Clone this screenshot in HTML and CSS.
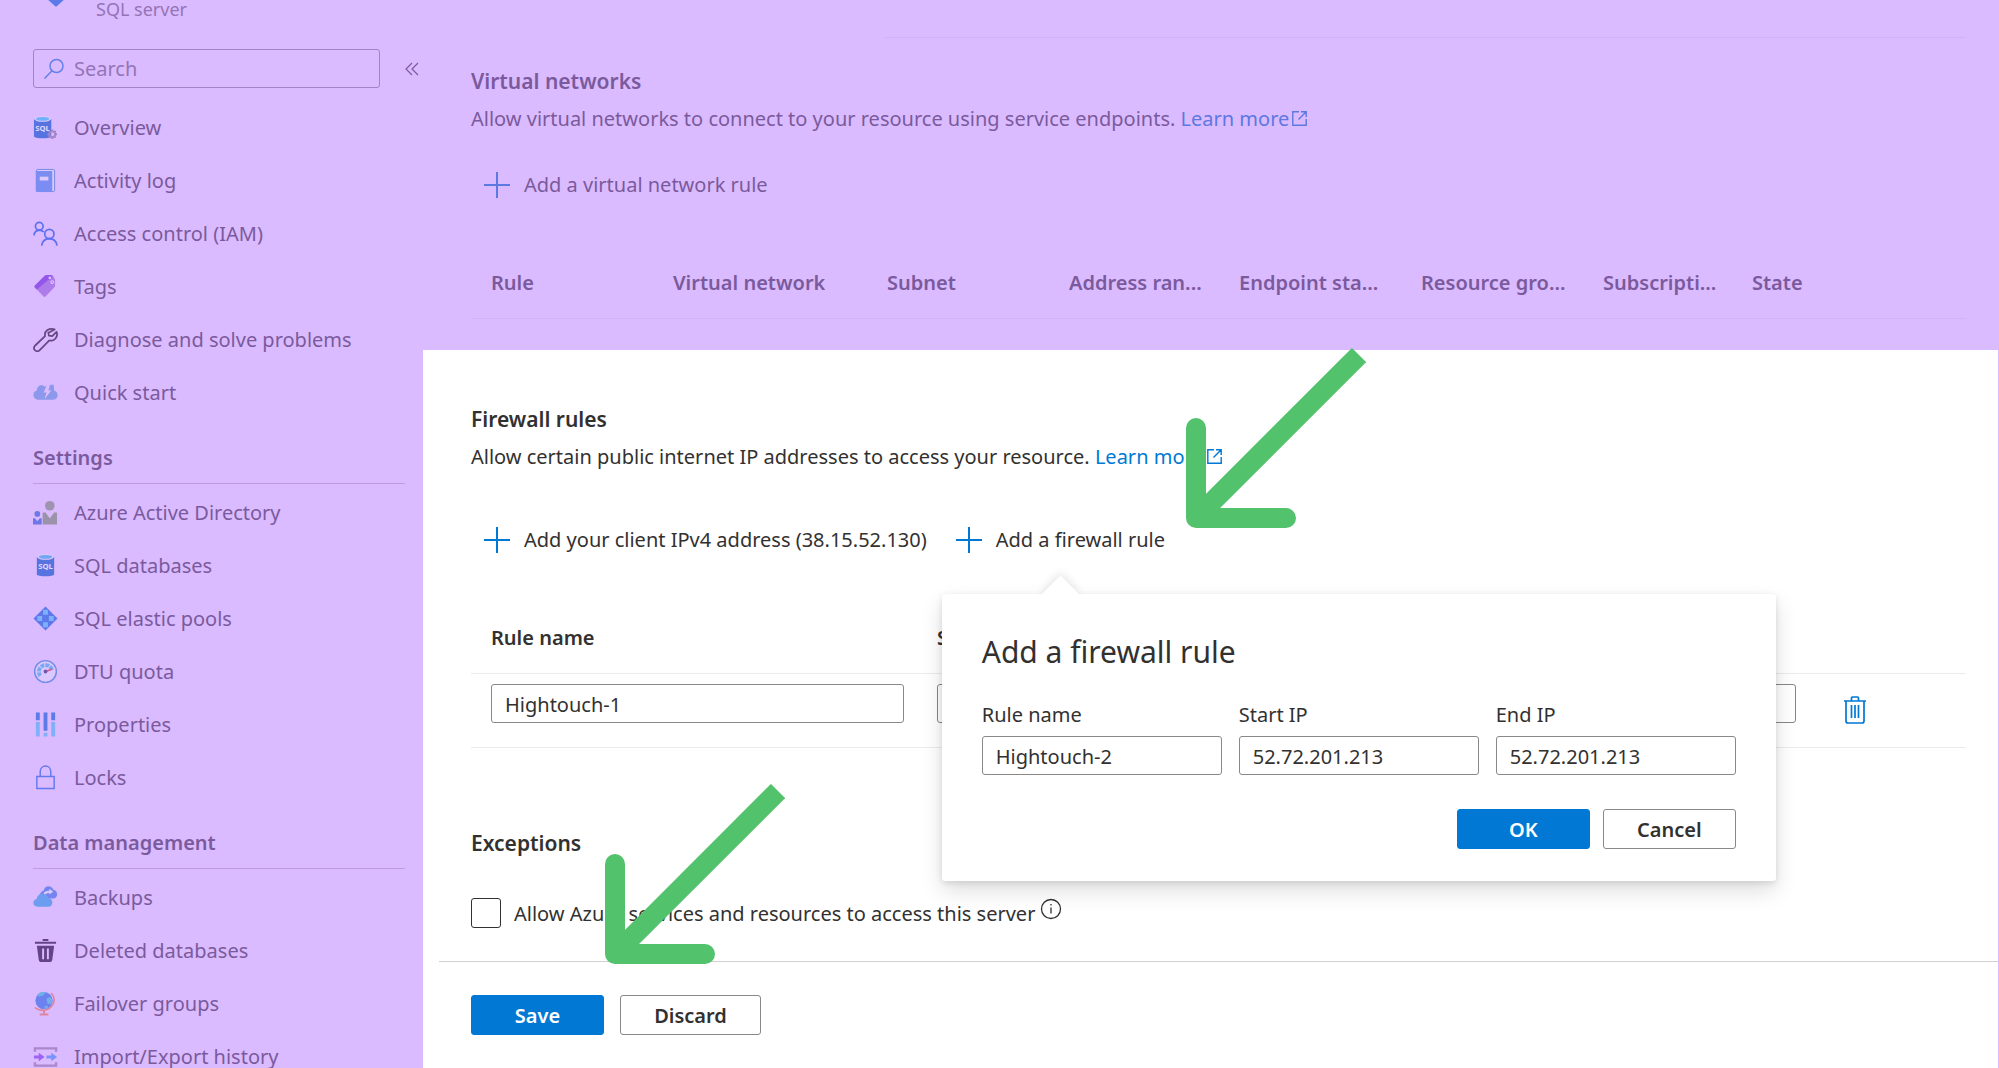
FILE: index.html
```html
<!DOCTYPE html>
<html lang="en">
<head>
<meta charset="utf-8">
<meta name="viewport" content="width=device-width, initial-scale=1">
<title>SQL server - Networking</title>
<link rel="stylesheet" href="styles.css">
</head>
<body>
<svg class="defs" aria-hidden="true">
  <symbol id="plus" viewBox="0 0 28 28"><path d="M14 1v26M1 14h26" fill="none" stroke="currentColor" stroke-width="2"/></symbol>
  <symbol id="external" viewBox="0 0 17 17"><path d="M8 1.800H1.800v13.400h13.400V9M10 1.800h5.200V7M15.200 1.800L7.500 9.500" fill="none" stroke="currentColor" stroke-width="1.400"/></symbol>
  <symbol id="arrow" viewBox="0 0 180 180"><path d="M10 80V170H100" fill="none" stroke="#53c26c" stroke-width="20" stroke-linecap="round" stroke-linejoin="round"/><path d="M10 170L173 7" stroke="#53c26c" stroke-width="20"/></symbol>
</svg>
<div class="app">
  <aside class="sidebar">
    <header class="resource">
      <svg class="resource-icon" viewBox="0 0 46 32"><path d="M13 0h20v16l-9 8q-1 1-2 0l-9-8z" fill="#5c7ae8"/></svg>
      <span>SQL server</span>
    </header>
    <div class="search-row">
      <label class="search">
        <svg class="search-icon" viewBox="0 0 22 22" aria-hidden="true"><circle cx="13.500" cy="8" r="6.500" fill="none" stroke="#6480ea" stroke-width="1.500"/><path d="M9 12.800L1.500 20.500" stroke="#6480ea" stroke-width="1.500"/></svg>
        <input type="search" placeholder="Search" aria-label="Search">
      </label>
      <button class="collapse" aria-label="Collapse menu"><svg viewBox="0 0 14 14"><path d="M7 1L1 7l6 6M13 1L7 7l6 6" fill="none" stroke="currentColor" stroke-width="1.200"/></svg></button>
    </div>
    <nav>
      <a class="item" href="#"><svg viewBox="0 0 26 26"><path d="M1 4v18c0 3 18 3 18 0V4z" fill="#5673e0"/><ellipse cx="10" cy="4" rx="9" ry="3" fill="#dcc8fc"/><ellipse cx="10" cy="4" rx="7" ry="2" fill="#6fb0fa"/><text x="10" y="17" class="sql">SQL</text><circle cx="20" cy="20" r="3" fill="none" stroke="#a385c6" stroke-width="2"/><path d="M20 15v2M20 23v2M15 20h2M23 20h2M16.500 16.500l1 1M22.500 22.500l1 1M23.500 16.500l-1 1M17.500 22.500l-1 1" stroke="#a385c6" stroke-width="2"/></svg>Overview</a>
      <a class="item" href="#"><svg viewBox="0 0 26 26"><rect x="3.500" y="1.500" width="19" height="23" rx="1.500" fill="#dcc8fc" stroke="#7187e5"/><path d="M3 3h17v22H4q-1 0-1-1z" fill="#7b8df3"/><rect x="7" y="9" width="9" height="4" fill="#dcc8fc"/></svg>Activity log</a>
      <a class="item" href="#"><svg viewBox="0 0 26 26" fill="none" stroke="#5d70f0" stroke-width="1.800"><circle cx="6.500" cy="5.500" r="4"/><path d="M1 15q.500-5 5.500-5.500 3 0 4.500 2"/><circle cx="17" cy="13.500" r="4.800"/><path d="M9 25.500q1-7 8-7.200 7 .200 8 7.200"/></svg>Access control (IAM)</a>
      <a class="item" href="#"><svg viewBox="0 0 26 26"><path d="M2 12L12 2q1-1 3-1h5l1 1 2 4v6q0 1-1 2L13 23.500q-1 1-2 0L2 14q-1-1 0-2z" fill="#ad7bea"/><path d="M2 12L12 2q1-1 3-1h4l1 3-4 2L4 16l-2-2q-1-1 0-2z" fill="#9355ea"/><circle cx="17.500" cy="4" r="1.300" fill="#e2ccff"/><circle cx="20" cy="8.500" r="1.500" fill="#b88af0" stroke="#e2ccff"/></svg>Tags</a>
      <a class="item" href="#"><svg viewBox="0 0 26 26"><path d="M22.500 2.500C17 .5 11.500 4 12.500 9.500L2 19.500c-3 4 2 7.500 5 4.500L17 14c5 1.500 9.500-4 7.500-9L20 9.500l-3.500-.5-.500-3z" fill="none" stroke="#674683" stroke-width="1.800" stroke-linejoin="round"/></svg>Diagnose and solve problems</a>
      <a class="item" href="#"><svg viewBox="0 0 26 26"><path d="M6 20.500c-7 0-7-8.500-2-9.500 0-6 6-7 8.500-4l3-2h6l.500 6c5 1 5 9.500-1 9.500z" fill="#8c98ec"/><path d="M15 4l-4 9h3l-2 7 7-9h-3l2-7z" fill="#dbbbff"/></svg>Quick start</a>
      <h2 class="group">Settings</h2>
      <a class="item" href="#"><svg viewBox="0 0 26 26"><circle cx="17.500" cy="6" r="5" fill="#9f94b0"/><path d="M10 13h3l4.500 6 4.500-6h3v12.500H10z" fill="#9c93aa"/><circle cx="4.500" cy="14.500" r="3" fill="#6d78e6"/><path d="M0 19h2l2.500 3L7 19h2v6.500H0z" fill="#6d78e6"/></svg>Azure Active Directory</a>
      <a class="item" href="#"><svg viewBox="0 0 26 26"><path d="M4 4v18c0 3 18 3 18 0V4z" fill="#5673e0"/><ellipse cx="13" cy="4" rx="9" ry="3" fill="#dcc8fc"/><ellipse cx="13" cy="4" rx="7" ry="2" fill="#6fa6f0"/><text x="13" y="17" class="sql">SQL</text></svg>SQL databases</a>
      <a class="item" href="#"><svg viewBox="0 0 26 26"><path d="M13 .5L25.500 13 13 25.500.5 13z" fill="#5c78ea"/><path d="M10.500 4h5v5h-5zM4.500 10.500h5v5h-5zM16.500 10.500h5v5h-5zM10.500 17h5v5h-5z" fill="#80b0fb"/></svg>SQL elastic pools</a>
      <a class="item" href="#"><svg viewBox="0 0 26 26"><circle cx="13" cy="13" r="11.300" fill="#dcc8fc" stroke="#718bea" stroke-width="1.500"/><path d="M7.500 17.500A7 7 0 1 1 20 12" fill="none" stroke="#79a8f5" stroke-width="4" stroke-dasharray="4 1"/><path d="M13 13l7-2.500" stroke="#d0609c" stroke-width="1.800"/><circle cx="13" cy="13" r="2" fill="#7556ac"/></svg>DTU quota</a>
      <a class="item" href="#"><svg viewBox="0 0 26 26"><path d="M3 .5h4v8H3zM11 .5h4v19h-4zM19 .5h4v8h-4z" fill="#5c7ae8"/><path d="M3 10.500h4v15H3zM11 21.500h4v4h-4zM19 10.500h4v15h-4z" fill="#80b0f7"/></svg>Properties</a>
      <a class="item" href="#"><svg viewBox="0 0 26 26" fill="none" stroke="#6478ef" stroke-width="1.500"><path d="M4 12h18v12.500H4zM7.500 12V7c0-8 11-8 11 0v5"/></svg>Locks</a>
      <h2 class="group">Data management</h2>
      <a class="item" href="#"><svg viewBox="0 0 26 26"><path d="M9 14c-4-4 0-8 2-8 1-6 9-6 10-1 6 1 5 9 0 9z" fill="#7485ef"/><path d="M11 9q1-3 6-3V4l4 3-4 3V8q-3 0-4 2z" fill="#dcc8fc"/><path d="M5 22.500c-6 0-6-7.500-1-8 0-6 9-8 12-1 6 1 5 9 0 9z" fill="#6d9df0"/></svg>Backups</a>
      <a class="item" href="#"><svg viewBox="0 0 26 26"><path d="M10 1h6v2h-6zM2 4h22v2H2zM4 8h18l-2 15q-.3 2-2 2H8q-1.700 0-2-2z" fill="#65438a"/><path d="M9.500 11h2v11h-2zM14.500 11h2v11h-2z" fill="#dbbbff"/></svg>Deleted databases</a>
      <a class="item" href="#"><svg viewBox="0 0 26 26"><circle cx="11.500" cy="10" r="9" fill="#6c82ee"/><path d="M5 3q5-4 8-1l-3 3-4 1zM14 8l4-2 2 3-1 5-4-1zM12 16l3-1 1 2-4 2z" fill="#75aeea"/><path d="M19 2c7 8 0 18-8 18-4 0-7-1-9-3" fill="none" stroke="#df849e" stroke-width="1.700"/><path d="M11.500 20v4M7 24.500h9" stroke="#df849e" stroke-width="2"/></svg>Failover groups</a>
      <a class="item" href="#"><svg viewBox="0 0 26 26"><path d="M2 8V4.500h22V8M2 19v3.500h22V19" fill="none" stroke="#ab87cc" stroke-width="2.500"/><path d="M1 12h5V9l6 4.500L6 18v-3H1z" fill="#9e62f5"/><path d="M14 12h5V9l6 4.500-6 4.500v-3h-5z" fill="#7893fb"/></svg>Import/Export history</a>
    </nav>
  </aside>

  <main class="content">
    <section class="virtual">
      <hr class="section-line">
      <h2>Virtual networks</h2>
      <p>Allow virtual networks to connect to your resource using service endpoints. <a href="#">Learn more<svg><use href="#external"/></svg></a></p>
      <div class="commands"><button class="command"><svg><use href="#plus"/></svg>Add a virtual network rule</button></div>
      <table class="networks">
        <colgroup><col class="w-m"><col class="w-l"><col class="w-m"><col class="w-s"><col class="w-m"><col class="w-m"><col class="w-xs"><col></colgroup>
        <thead><tr><th>Rule</th><th>Virtual network</th><th>Subnet</th><th>Address ran...</th><th>Endpoint sta...</th><th>Resource gro...</th><th>Subscripti...</th><th>State</th></tr></thead>
      </table>
    </section>

    <section class="firewall">
      <h2>Firewall rules</h2>
      <p>Allow certain public internet IP addresses to access your resource. <a href="#">Learn more<svg><use href="#external"/></svg></a></p>
      <div class="commands">
        <button class="command"><svg><use href="#plus"/></svg>Add your client IPv4 address (38.15.52.130)</button>
        <div class="anchor">
          <button class="command"><svg><use href="#plus"/></svg>Add a firewall rule</button>
          <form class="popover">
            <h3>Add a firewall rule</h3>
            <div class="fields">
              <label>Rule name<input type="text" value="Hightouch-2"></label>
              <label>Start IP<input type="text" value="52.72.201.213"></label>
              <label>End IP<input type="text" value="52.72.201.213"></label>
            </div>
            <div class="buttons end">
              <button type="button" class="button primary">OK</button>
              <button type="button" class="button">Cancel</button>
            </div>
          </form>
          <svg class="arrow to-rule" aria-hidden="true"><use href="#arrow"/></svg>
        </div>
      </div>
      <table class="rules">
        <colgroup><col><col><col><col class="w-action"></colgroup>
        <thead><tr><th>Rule name</th><th>Start IP</th><th>End IP</th><th></th></tr></thead>
        <tbody><tr>
          <td><input type="text" value="Hightouch-1" aria-label="Rule name"></td>
          <td><input type="text" aria-label="Start IP"></td>
          <td><input type="text" aria-label="End IP"></td>
          <td class="action"><button class="delete" aria-label="Delete rule"><svg viewBox="0 0 22 28" fill="none" stroke="#0078d4" stroke-width="1.700"><path d="M0 5h22M7.500 5V2q0-1 1-1h5q1 0 1 1v3M2 5v20q0 2 2 2h14q2 0 2-2V5M7.500 9v13M11 9v13M14.500 9v13"/></svg></button></td>
        </tr></tbody>
      </table>
      <h2 class="exceptions">Exceptions</h2>
      <div class="check">
        <input type="checkbox" id="allow">
        <label for="allow">Allow Azure services and resources to access this server</label>
        <svg class="info" viewBox="0 0 22 22" aria-hidden="true"><circle cx="11" cy="11" r="9.500" fill="none" stroke="#323130" stroke-width="1.300"/><path d="M11 9.500v6M11 6v1.500" stroke="#323130" stroke-width="1.300"/></svg>
      </div>
    </section>
    <footer class="buttons actions">
      <button class="button primary">Save</button>
      <button class="button wide">Discard</button>
      <svg class="arrow to-save" aria-hidden="true"><use href="#arrow"/></svg>
    </footer>
  </main>
</div>
</body>
</html>
```
FILE: styles.css
```css
* { box-sizing: border-box; }
body {
  margin: 0;
  overflow: hidden;
  background: #dbbbff;
  color: #323130;
  font: 20px/28px "Noto Sans", "Open Sans", sans-serif;
}
h2, h3, p, table { margin: 0; }
h2 { font-size: 21px; line-height: 28px; font-weight: 600; }
a { color: #0078d4; text-decoration: none; }
button, input { font: inherit; color: inherit; }
button { padding: 0; border: 0; background: none; }
.defs { position: absolute; width: 0; height: 0; }

.app { display: flex; height: 100vh; overflow: hidden; }

/* Sidebar */
.sidebar { flex: 0 0 423px; min-width: 0; padding: 0 4px 0 33px; color: #7a5a9c; }
.sidebar nav { margin-right: 14px; }
.resource { display: flex; height: 49px; color: #9474b6; font-size: 18px; line-height: 18px; }
.resource-icon { width: 46px; height: 32px; margin: -18px 17px 0 0; }
.search-row { display: flex; align-items: center; height: 39px; margin-bottom: 13px; }
.search { display: flex; align-items: center; width: 347px; height: 39px; padding: 0 9px; border: 1px solid #a283c8; border-radius: 3px; }
.search-icon { width: 22px; height: 22px; margin-right: 9px; }
.search input { flex: 1; min-width: 0; padding: 0; border: 0; outline: 0; background: none; }
.search input::placeholder { color: #9474b6; opacity: 1; }
.collapse { flex: none; margin-left: 25px; width: 14px; height: 14px; }
.collapse svg { display: block; width: 14px; height: 14px; }
.item { display: flex; align-items: center; gap: 16px; height: 53px; color: inherit; white-space: nowrap; }
.item svg { flex: none; width: 25px; height: 25px; }
.sql { fill: #e6d8ff; font-size: 8px; font-weight: 700; text-anchor: middle; }
.group { height: 65px; margin-bottom: 2px; padding-top: 25px; border-bottom: 1px solid #bf9be6; font-size: 20px; }

/* Content */
.content { flex: 1; min-width: 0; display: flex; flex-direction: column; }
.virtual { flex: none; height: 350px; padding: 37px 33px 0 48px; color: #7a5a9c; }
.section-line { height: 1px; margin: 0 0 29px 414px; border: 0; background: #d2b3f8; }
.virtual a, .virtual .command svg { color: #5c78e2; }
.virtual p, .firewall p { margin-top: 10px; }
p svg { width: 17px; height: 17px; margin-left: 2px; vertical-align: -1px; }
.commands { display: flex; gap: 28px; }
.virtual .commands { margin: 38px 0 70px 12px; }
.firewall .commands { margin: 55px 0 70px 12px; }
.command { display: flex; align-items: center; gap: 13px; height: 28px; white-space: nowrap; }
.command svg { width: 28px; height: 28px; color: #0078d4; }

table { width: 100%; border-collapse: separate; border-spacing: 0; table-layout: fixed; }
th { padding: 0 0 21px 20px; border-bottom: 1px solid #edebe9; font-weight: 600; text-align: left; white-space: nowrap; }
.networks th { border-color: #d2b3f8; }
.w-m { width: 182px; }
.w-l { width: 214px; }
.w-s { width: 170px; }
.w-xs { width: 149px; }
.w-action { width: 157px; }
td { padding: 10px 13px 24px 20px; border-bottom: 1px solid #edebe9; }
input[type="text"] { display: block; width: 100%; height: 39px; padding: 2px 13px 0; border: 1px solid #8a8886; border-radius: 3px; background: #fff; }
.rules .action { padding: 22px 0 0 35px; vertical-align: top; }
.delete, .delete svg { display: block; width: 22px; height: 28px; }

.firewall { flex: none; margin-right: 1px; padding: 55px 32px 33px 48px; background: #fff; }
.exceptions { margin: 81px 0 41px; }
.check { display: flex; align-items: center; height: 30px; }
.check label { padding-top: 2px; }
.check input { appearance: none; width: 30px; height: 30px; margin: 0 13px 0 0; border: 1px solid #323130; border-radius: 3px; }
.info { width: 22px; height: 22px; margin: -8px 0 0 5px; }

.buttons { display: flex; gap: 13px; }
.button { width: 133px; height: 40px; padding-top: 1px; border: 1px solid #8a8886; border-radius: 3px; background: #fff; font-weight: 600; }
.primary { border-color: #0078d4; background: #0078d4; color: #fff; }
.wide { width: 141px; }
.actions { position: relative; flex: 1; gap: 16px; margin-right: 1px; padding: 34px 48px; background: linear-gradient(#d2d0ce, #d2d0ce) 16px 0 / 100% 1px no-repeat #fff; }

/* Callout anchored to its command */
.anchor { position: relative; }
.popover { position: absolute; z-index: 1; top: 68px; left: -13px; width: 834px; padding: 38px 40px 32px; border-radius: 3px; background: #fff; box-shadow: 0 10px 22px rgba(0, 0, 0, .13), 0 2px 6px rgba(0, 0, 0, .11); }
.popover::before { content: ""; position: absolute; top: -13px; left: 105px; width: 27px; height: 27px; background: #fff; transform: rotate(45deg); box-shadow: -2px -2px 8px rgba(0, 0, 0, .1); clip-path: polygon(-40% -40%, 140% -40%, -40% 140%); }
.popover h3 { font-size: 30px; line-height: 40px; font-weight: 400; }
.fields { display: grid; grid-template-columns: repeat(3, 1fr); gap: 17px; margin: 29px 0 34px; }
.fields label { display: block; }
.fields input { margin-top: 7px; }
.end { justify-content: flex-end; }

/* Guide arrows */
.arrow { position: absolute; z-index: 2; width: 180px; height: 180px; pointer-events: none; }
.to-rule { left: 231px; top: -178px; }
.to-save { left: 182px; top: -177px; }
```
